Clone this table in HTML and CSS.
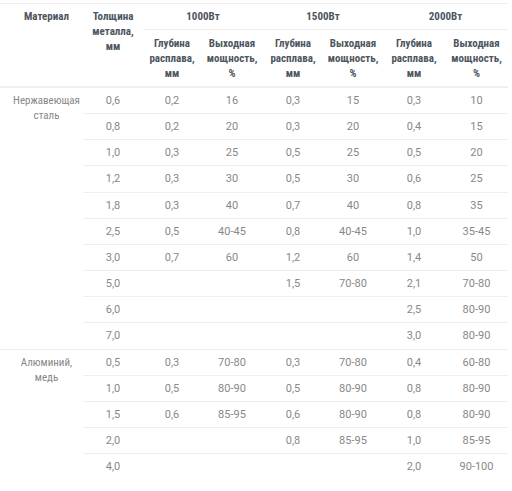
FILE: index.html
```html
<!DOCTYPE html>
<html lang="ru">
<head>
<meta charset="utf-8">
<link rel="stylesheet" href="styles.css">
</head>
<body>
<table class="spec">
  <colgroup>
    <col class="c-mat"><col class="c-th"><col class="c-a"><col class="c-b"><col class="c-a2"><col class="c-b2"><col class="c-a3"><col class="c-b3">
  </colgroup>
  <thead>
    <tr class="h1">
      <th rowspan="2" class="first">Материал</th>
      <th rowspan="2">Толщина<br>металла,<br>мм</th>
      <th colspan="2" class="grp">1000Вт</th>
      <th colspan="2" class="grp">1500Вт</th>
      <th colspan="2" class="grp">2000Вт</th>
    </tr>
    <tr class="h2">
      <th>Глубина<br>расплава,<br>мм</th>
      <th>Выходная<br>мощность,<br>%</th>
      <th>Глубина<br>расплава,<br>мм</th>
      <th>Выходная<br>мощность,<br>%</th>
      <th>Глубина<br>расплава,<br>мм</th>
      <th>Выходная<br>мощность,<br>%</th>
    </tr>
  </thead>
  <tbody>
    <tr><td rowspan="10" class="mat">Нержавеющая<br>сталь</td><td>0,6</td><td>0,2</td><td>16</td><td>0,3</td><td>15</td><td>0,3</td><td>10</td></tr>
    <tr><td>0,8</td><td>0,2</td><td>20</td><td>0,3</td><td>20</td><td>0,4</td><td>15</td></tr>
    <tr><td>1,0</td><td>0,3</td><td>25</td><td>0,5</td><td>25</td><td>0,5</td><td>20</td></tr>
    <tr><td>1,2</td><td>0,3</td><td>30</td><td>0,5</td><td>30</td><td>0,6</td><td>25</td></tr>
    <tr><td>1,8</td><td>0,3</td><td>40</td><td>0,7</td><td>40</td><td>0,8</td><td>35</td></tr>
    <tr><td>2,5</td><td>0,5</td><td>40-45</td><td>0,8</td><td>40-45</td><td>1,0</td><td>35-45</td></tr>
    <tr><td>3,0</td><td>0,7</td><td>60</td><td>1,2</td><td>60</td><td>1,4</td><td>50</td></tr>
    <tr><td>5,0</td><td></td><td></td><td>1,5</td><td>70-80</td><td>2,1</td><td>70-80</td></tr>
    <tr><td>6,0</td><td></td><td></td><td></td><td></td><td>2,5</td><td>80-90</td></tr>
    <tr><td>7,0</td><td></td><td></td><td></td><td></td><td>3,0</td><td>80-90</td></tr>
    <tr><td rowspan="5" class="mat last">Алюминий,<br>медь</td><td>0,5</td><td>0,3</td><td>70-80</td><td>0,3</td><td>70-80</td><td>0,4</td><td>60-80</td></tr>
    <tr><td>1,0</td><td>0,5</td><td>80-90</td><td>0,5</td><td>80-90</td><td>0,8</td><td>80-90</td></tr>
    <tr><td>1,5</td><td>0,6</td><td>85-95</td><td>0,6</td><td>80-90</td><td>0,8</td><td>80-90</td></tr>
    <tr><td>2,0</td><td></td><td></td><td>0,8</td><td>85-95</td><td>1,0</td><td>85-95</td></tr>
    <tr class="end"><td>4,0</td><td></td><td></td><td></td><td></td><td>2,0</td><td>90-100</td></tr>
  </tbody>
</table>
</body>
</html>
```
FILE: styles.css
```css
html, body {
  margin: 0;
  padding: 0;
  background: #ffffff;
}
body {
  padding-top: 3px;
  font-family: Roboto, "Liberation Sans", sans-serif;
  font-size: 11px;
}
.spec {
  width: 508px;
  border-collapse: collapse;
  table-layout: fixed;
}
.c-mat { width: 83px; }
.c-th { width: 60px; }
.c-a { width: 58px; }
.c-b { width: 62px; }
.c-a2 { width: 60px; }
.c-b2 { width: 60px; }
.c-a3 { width: 62px; }
.c-b3 { width: 63px; }
.spec th {
  font-weight: 700;
  font-stretch: condensed;
  color: #4d5660;
  line-height: 15px;
  text-align: center;
  vertical-align: top;
  padding: 5px 2px;
  border-top: 1px solid #eeeeee;
}
.spec th.first { padding-left: 10px; padding-right: 0; }
.spec .grp { border-bottom: 1px solid #eeeeee; }
.spec .h2 th { padding: 6px 2px 5px; border-top: 1px solid #eeeeee; }
.spec thead { border-bottom: 2px solid #f0f0f0; }
.spec td {
  color: #888888;
  line-height: 15.15px;
  text-align: center;
  vertical-align: top;
  padding: 5px 2px;
  border-bottom: 1px solid #eeeeee;
}
.spec td.mat {
  font-stretch: condensed;
  padding-left: 10px;
  padding-right: 0;
  border-bottom: 1px solid #eeeeee;
}
.spec td.mat.last { border-bottom: none; }
.spec .end td { border-bottom: none; }
```
